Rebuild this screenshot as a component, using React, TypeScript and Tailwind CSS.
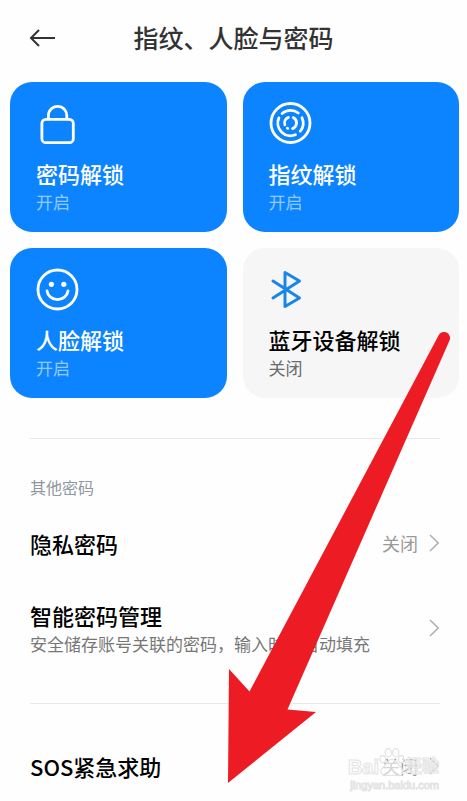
import type { ReactNode } from "react";

function LockIcon() {
  return (
    <svg viewBox="0 0 44 44" className="size-11" fill="none" stroke="currentColor" strokeWidth="2.8">
      <rect x="5.9" y="18.3" width="31.4" height="23.4" rx="4" />
      <path d="M12.4 18.3V14.5a9.2 9.2 0 0 1 18.4 0V18.3" />
    </svg>
  );
}

function FingerprintIcon() {
  return (
    <svg
      viewBox="0 0 44 44"
      className="size-11"
      fill="none"
      stroke="currentColor"
      strokeWidth="2.8"
      strokeLinecap="round"
    >
      <circle cx="21.5" cy="22" r="19.5" />
      <path d="M13.1 12.5A12.7 12.7 0 0 1 29.3 12" />
      <path d="M33 16.8A12.7 12.7 0 0 1 31.3 30.1" />
      <path d="M26.5 33.7A12.7 12.7 0 0 1 9.9 16.9" />
      <path d="M19.4 16.4A6 6 0 0 0 15.8 23.8" />
      <path d="M18.4 27.2L18.8 27.4" />
      <path d="M24.2 16.6A6 6 0 0 1 23.6 27.6" />
    </svg>
  );
}

function FaceIcon() {
  return (
    <svg viewBox="0 0 44 44" className="size-11" fill="none" stroke="currentColor" strokeWidth="2.8">
      <circle cx="21.5" cy="22.5" r="19.5" />
      <circle cx="15.4" cy="17.3" r="2.6" fill="currentColor" stroke="none" />
      <circle cx="27.8" cy="17.3" r="2.6" fill="currentColor" stroke="none" />
      <path d="M11 24a10.6 10 0 0 0 21 0" strokeLinecap="round" />
    </svg>
  );
}

function BluetoothIcon() {
  return (
    <svg
      viewBox="0 0 44 44"
      className="size-11"
      fill="none"
      stroke="currentColor"
      strokeWidth="3"
      strokeLinejoin="round"
      strokeLinecap="round"
    >
      <path d="M4 14L30.5 31L16 39.5V5.5L30.5 14L4 31" />
    </svg>
  );
}

function Chevron() {
  return (
    <svg
      viewBox="0 0 12 18"
      className="h-[18px] w-3 shrink-0 text-[#b0b0b0]"
      fill="none"
      stroke="currentColor"
      strokeWidth="1.6"
    >
      <path d="M2 1L10.2 9L2 17" />
    </svg>
  );
}

type CardProps = {
  icon: ReactNode;
  title: string;
  on?: boolean;
};

function UnlockCard({ icon, title, on = false }: CardProps) {
  return (
    <button
      className={`flex flex-col items-start rounded-[22px] px-[26px] pt-[19px] pb-[17px] text-left ${
        on ? "bg-[#0d84ff] text-white" : "bg-[#f6f6f6] text-black"
      }`}
    >
      <span className={on ? "" : "text-[#1a85e8]"}>{icon}</span>
      <span className="mt-3 text-[22px] leading-8 font-medium">{title}</span>
      <span className={`text-[17px] leading-[26px] ${on ? "text-[#92caff]" : "text-[#6b6b6b]"}`}>
        {on ? "开启" : "关闭"}
      </span>
    </button>
  );
}

type RowProps = {
  title: string;
  desc?: string;
  value?: string;
};

function SettingRow({ title, desc, value }: RowProps) {
  return (
    <button className="flex w-full items-center justify-between text-left">
      <span className="flex flex-col">
        <span className="text-[22px] leading-8 font-medium text-black">{title}</span>
        {desc && <span className="text-[17px] leading-[26px] text-[#777]">{desc}</span>}
      </span>
      <span className="flex items-center gap-2.5">
        {value && <span className="text-[18px] leading-6 text-[#999]">{value}</span>}
        <Chevron />
      </span>
    </button>
  );
}

function PointerArrow() {
  return (
    <svg
      viewBox="0 0 224 452"
      className="pointer-events-none absolute top-[332px] right-[16px] h-[452px] w-[224px]"
      fill="#ed1c24"
    >
      <path d="M1 451L2 337L22.5 359.5L211.5 3.5A6 6 0 0 1 222.5 8.5L60.5 377.5L89 380Z" />
    </svg>
  );
}

function Watermark() {
  return (
    <div className="pointer-events-none absolute right-7 bottom-2.5 flex flex-col items-end font-['Liberation_Sans','Noto_Sans_CJK_SC',sans-serif] text-white/60 [-webkit-text-stroke:1px_#e4e4e4]">
      <div className="flex items-end font-bold">
        <span className="text-[20px] leading-6">Bai</span>
        <svg
          viewBox="0 0 28 34"
          className="h-8 w-[26px]"
          fill="white"
          fillOpacity="0.6"
          stroke="#e0e0e0"
          strokeWidth="1.2"
        >
          <ellipse cx="4" cy="13" rx="3" ry="4" />
          <ellipse cx="10" cy="6" rx="3.3" ry="4.5" />
          <ellipse cx="18" cy="6" rx="3.3" ry="4.5" />
          <ellipse cx="24" cy="13" rx="3" ry="4" />
          <path d="M14 13C9 13 8 19 4 22C0 26 3 31 8 30.5C12 30 16 30 20 30.5C25 31 28 26 24 22C20 19 19 13 14 13Z" />
        </svg>
        <span className="text-[17px] leading-6">经验</span>
      </div>
      <span className="text-[11px] leading-3">jingyan.baidu.com</span>
    </div>
  );
}

export default function App() {
  return (
    <div className="relative min-h-screen bg-[#fefefe] font-['Noto_Sans_CJK_SC',sans-serif]">
      <header className="grid grid-cols-[1fr_auto_1fr] items-center px-7 pt-[19px] pb-[27px]">
        <button aria-label="返回" className="text-[#333]">
          <svg viewBox="0 0 28 20" className="h-5 w-7" fill="none" stroke="currentColor" strokeWidth="2">
            <path d="M27 11H3M11 3L3 11L11 19" />
          </svg>
        </button>
        <h1 className="text-[25px] leading-9 font-medium text-[#333]">指纹、人脸与密码</h1>
      </header>

      <main>
        <div className="grid grid-cols-2 gap-4 pr-2 pl-2.5">
          <UnlockCard on icon={<LockIcon />} title="密码解锁" />
          <UnlockCard on icon={<FingerprintIcon />} title="指纹解锁" />
          <UnlockCard on icon={<FaceIcon />} title="人脸解锁" />
          <UnlockCard icon={<BluetoothIcon />} title="蓝牙设备解锁" />
        </div>

        <section className="mt-10 mr-[27px] ml-[30px] border-t border-[#e8e8e8] pt-9">
          <h2 className="text-[16px] leading-6 text-[#8f979f]">其他密码</h2>
          <div className="flex flex-col gap-10 pt-7 pb-[46px]">
            <SettingRow title="隐私密码" value="关闭" />
            <SettingRow title="智能密码管理" desc="安全储存账号关联的密码，输入时可自动填充" />
          </div>
        </section>

        <section className="mr-[27px] ml-[30px] border-t border-[#e8e8e8] pt-[46px] pb-4">
          <SettingRow title="SOS紧急求助" value="关闭" />
        </section>
      </main>

      <Watermark />
      <PointerArrow />
    </div>
  );
}
